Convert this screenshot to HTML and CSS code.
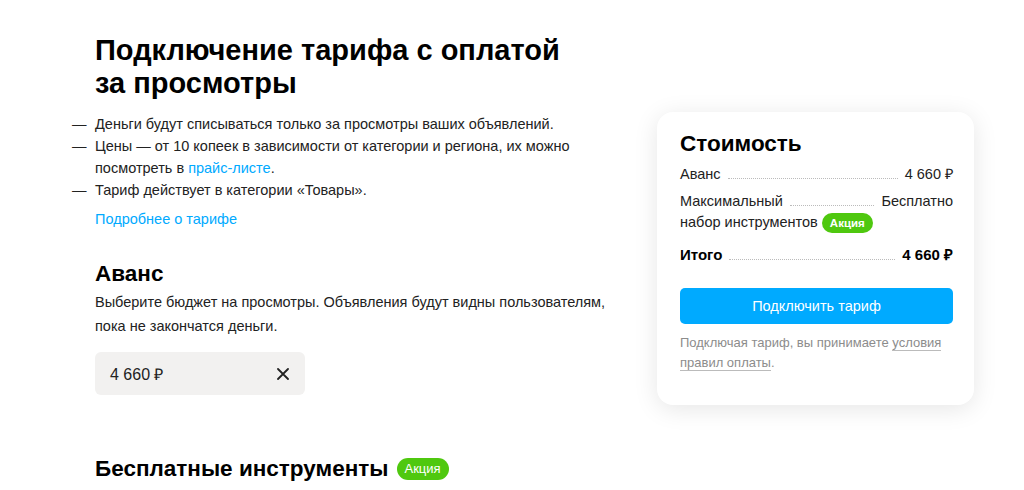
FILE: index.html
```html
<!DOCTYPE html>
<html lang="ru">
<head>
  <meta charset="UTF-8" />
  <title>Подключение тарифа с оплатой за просмотры</title>
  <link rel="stylesheet" href="styles.css">
</head>
<body>

<div class="page">
  <div class="main">
    <h1 class="title">Подключение тарифа с оплатой за&nbsp;просмотры</h1>

    <ul class="notes">
      <li>Деньги будут списываться только за просмотры ваших объявлений.</li>
      <li>Цены — от 10 копеек в зависимости от категории и региона, их можно посмотреть в <a href="#" class="link">прайс-листе</a>.</li>
      <li>Тариф действует в категории «Товары».</li>
    </ul>
    <a href="#" class="link more">Подробнее о тарифе</a>

    <!-- Аванс -->
    <h2 class="section-title">Аванс</h2>
    <p class="section-text">Выберите бюджет на просмотры. Объявления будут видны пользователям, пока не закончатся деньги.</p>
    <div class="amount">
      <span>4 660 ₽</span>
      <svg class="clear" width="12" height="12" viewBox="0 0 12 12">
        <path d="M1 1 L11 11 M11 1 L1 11" stroke="#222" stroke-width="1.8" stroke-linecap="round"/>
      </svg>
    </div>

    <h2 class="section-title tools">Бесплатные инструменты <span class="badge big">Акция</span></h2>
  </div>

  <!-- Стоимость -->
  <div class="card">
    <h3 class="card-title">Стоимость</h3>
    <div class="row">
      <span class="label">Аванс</span>
      <span class="dots"></span>
      <span class="value">4 660 ₽</span>
    </div>
    <div class="row">
      <span class="label">Максимальный</span>
      <span class="dots"></span>
      <span class="value">Бесплатно</span>
    </div>
    <div class="row-sub">набор инструментов <span class="badge">Акция</span></div>
    <div class="row total">
      <span class="label">Итого</span>
      <span class="dots"></span>
      <span class="value">4 660 ₽</span>
    </div>
    <button class="btn">Подключить тариф</button>
    <p class="terms">Подключая тариф, вы принимаете <a href="#">условия правил оплаты</a>.</p>
  </div>
</div>

</body>
</html>
```

FILE: styles.css
```css
html, body {
  margin: 0;
  padding: 0;
  background: #fff;
  font-family: 'Liberation Sans', Arial, sans-serif;
  color: #000;
}

.page {
  display: flex;
  align-items: flex-start;
  padding: 34px 0 0 95px;
  gap: 32px;
}

.main {
  width: 530px;
}

.title {
  margin: 0;
  font-size: 29px;
  line-height: 33px;
  font-weight: bold;
  width: 480px;
}

.notes {
  list-style: none;
  margin: 13px 0 0;
  padding: 0;
  font-size: 14.5px;
  line-height: 22px;
  color: #222;
}

.notes li {
  position: relative;
}

.notes li::before {
  content: "—";
  position: absolute;
  left: -23px;
}

.link {
  color: #0af;
  text-decoration: none;
}

.more {
  display: inline-block;
  margin-top: 7px;
  font-size: 14.5px;
  line-height: 22px;
}

.section-title {
  margin: 30px 0 0;
  font-size: 22.5px;
  line-height: 28px;
  font-weight: bold;
}

.section-text {
  margin: 2px 0 0;
  font-size: 14.5px;
  line-height: 24px;
  color: #222;
}

.amount {
  display: flex;
  align-items: center;
  justify-content: space-between;
  width: 210px;
  height: 43px;
  box-sizing: border-box;
  padding: 0 16px 0 15px;
  margin-top: 14px;
  background: #f2f1f0;
  border-radius: 6px;
  font-size: 16px;
  color: #222;
}

.tools {
  margin-top: 60px;
  display: flex;
  align-items: center;
  gap: 8px;
}

.badge {
  display: inline-block;
  background: #4fc80f;
  color: #fff;
  font-size: 11.5px;
  font-weight: bold;
  line-height: 20px;
  padding: 0 8px;
  border-radius: 10px;
  vertical-align: middle;
}

.badge.big {
  font-size: 13px;
  font-weight: normal;
  line-height: 22px;
  padding: 0 8px;
  border-radius: 11px;
}

/* Карточка стоимости */
.card {
  width: 317px;
  box-sizing: border-box;
  margin-top: 78px;
  padding: 18px 21px 32px 23px;
  background: #fff;
  border-radius: 16px;
  box-shadow: 0 4px 24px rgba(0, 0, 0, 0.1);
}

.card-title {
  margin: 0 0 5px;
  font-size: 22.5px;
  line-height: 28px;
  font-weight: bold;
}

.row {
  display: flex;
  align-items: baseline;
  font-size: 14.5px;
  line-height: 22px;
  color: #222;
  margin-top: 5px;
}

.row:first-of-type {
  margin-top: 0;
}

.dots {
  flex: 1;
  margin: 0 7px;
  border-bottom: 1px dotted #bbb;
}

.row-sub {
  font-size: 14.5px;
  line-height: 21px;
  color: #222;
}

.total {
  margin-top: 11px;
  font-weight: bold;
  color: #000;
  font-size: 15px;
}

.btn {
  display: block;
  width: 100%;
  height: 36px;
  margin-top: 22px;
  border: none;
  border-radius: 5px;
  background: #00aaff;
  color: #fff;
  font-family: inherit;
  font-size: 14.5px;
}

.terms {
  margin: 9px 0 0;
  font-size: 13px;
  line-height: 20px;
  color: #8c8c8c;
}

.terms a {
  color: #8c8c8c;
  text-decoration: none;
  border-bottom: 1px solid #bbb;
}
```
